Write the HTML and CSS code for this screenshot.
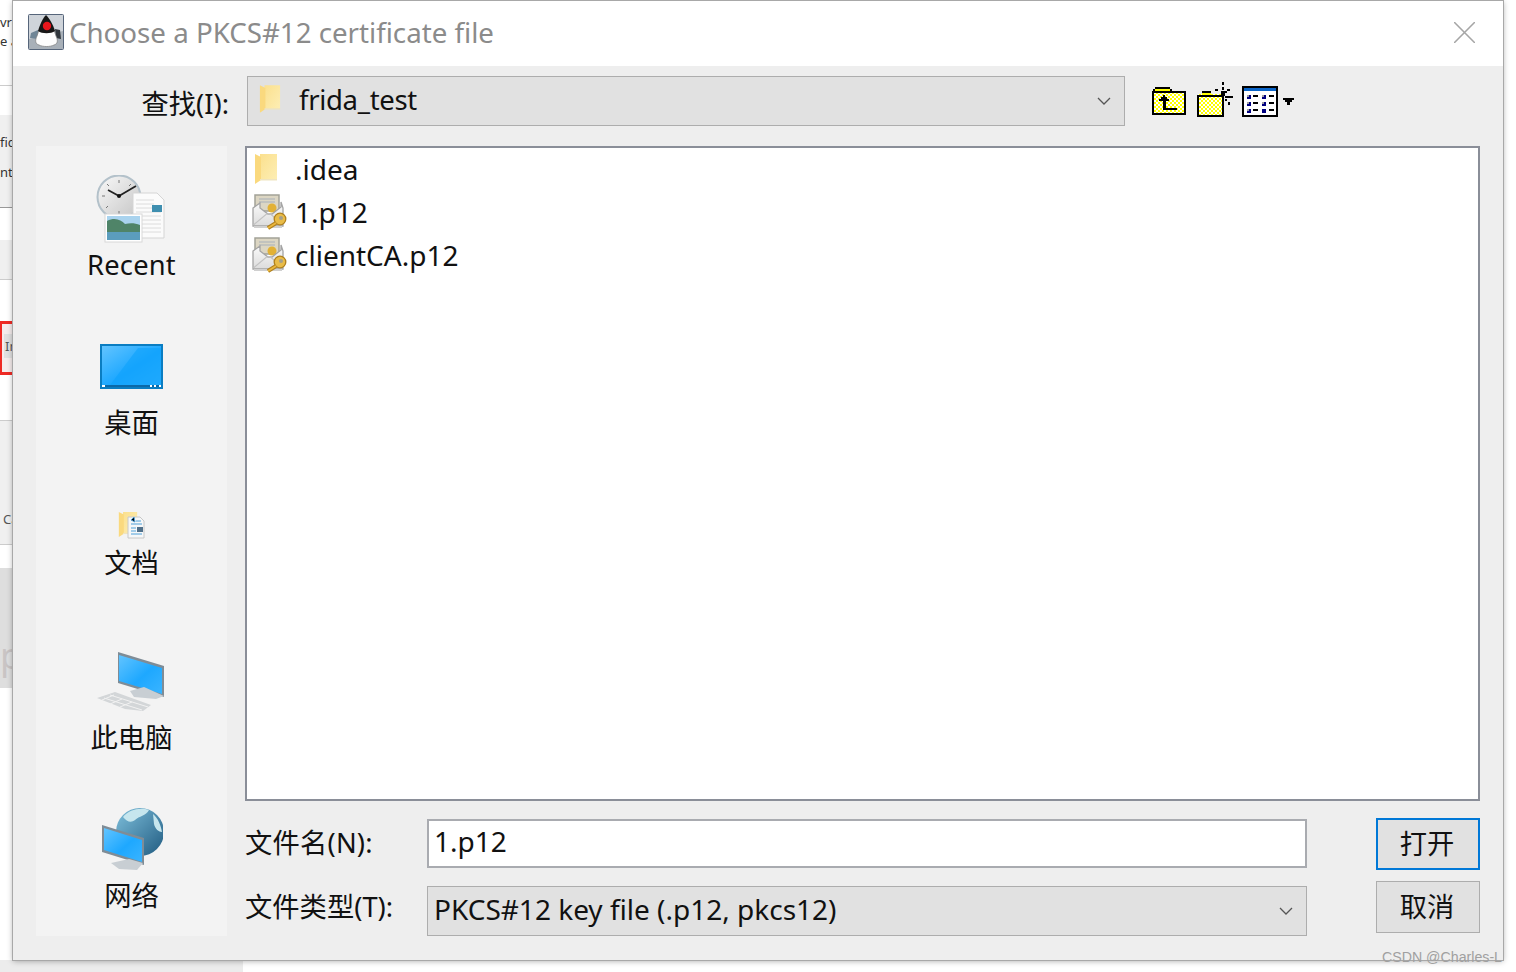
FILE: index.html
```html
<!DOCTYPE html>
<html lang="zh-CN">
<head>
  <meta charset="UTF-8">
  <title>Choose a PKCS#12 certificate file</title>
  <link rel="stylesheet" href="styles.css">
</head>
<body>
  <svg class="defs" width="0" height="0">
    <defs>
      <pattern id="check" width="4" height="4" patternUnits="userSpaceOnUse">
        <rect width="4" height="4" fill="#ffff00"/>
        <rect width="2" height="2" fill="#fff"/>
        <rect x="2" y="2" width="2" height="2" fill="#fff"/>
      </pattern>
      <linearGradient id="folderFill" x1="0" y1="0" x2="1" y2="1">
        <stop offset="0" stop-color="#fbe08e"/>
        <stop offset="1" stop-color="#fdeeb4"/>
      </linearGradient>
      <linearGradient id="screen" x1="0" y1="0" x2="1" y2="1">
        <stop offset="0" stop-color="#62c4ff"/>
        <stop offset="0.55" stop-color="#1ea8ff"/>
        <stop offset="1" stop-color="#3ab4ff"/>
      </linearGradient>
      <linearGradient id="globe" x1="0" y1="0" x2="1" y2="1">
        <stop offset="0" stop-color="#7fc0dc"/>
        <stop offset="1" stop-color="#1f5a80"/>
      </linearGradient>
      <linearGradient id="clockFace" x1="0" y1="0" x2="1" y2="1">
        <stop offset="0" stop-color="#fafafa"/>
        <stop offset="1" stop-color="#c4c4c4"/>
      </linearGradient>
      <linearGradient id="envelope" x1="0" y1="0" x2="0" y2="1">
        <stop offset="0" stop-color="#fbfbfb"/>
        <stop offset="1" stop-color="#dcdcdc"/>
      </linearGradient>
      <symbol id="folder" viewBox="0 0 24 32">
        <path d="M6 1h17v26H6z" fill="url(#folderFill)"/>
        <path d="M1 1l6 3v23l-6 4z" fill="#fad97e"/>
        <path d="M6 26h17v1.500H6z" fill="#efe4bf"/>
      </symbol>
      <symbol id="certificate" viewBox="0 0 36 36">
        <path d="M3 1h24v16H3z" fill="#dcd6c3" stroke="#a3a298" stroke-width="1.500"/>
        <path d="M7 5h16M7 8h16" stroke="#a8b0ba" stroke-width="1.200"/>
        <circle cx="20" cy="14" r="4.500" fill="#e2b135"/>
        <path d="M1 14l7-5v5l8 6h4l9-7V8l2 6v18H1z" fill="url(#envelope)" stroke="#a4a4a4" stroke-width="1.300"/>
        <path d="M1.500 31l13-11h4l13 11" fill="none" stroke="#c2c2c2" stroke-width="1.200"/>
        <path d="M2 33h28" stroke="#d0d0d0" stroke-width="2"/>
        <circle cx="28" cy="25" r="5.800" fill="#e9bc48" stroke="#b0801c" stroke-width="1.300"/>
        <circle cx="29" cy="24" r="2" fill="#a5a08c"/>
        <path d="M24 29l-8 5" fill="none" stroke="#b0801c" stroke-width="4"/>
        <path d="M24 29l-8 5" fill="none" stroke="#eab63c" stroke-width="2"/>
      </symbol>
    </defs>
  </svg>

  <div class="backdrop">
    <div class="band band-a"></div>
    <div class="band band-b"></div>
    <div class="band band-c"></div>
    <div class="band band-d"></div>
    <div class="red-box"><div class="red-inner"></div></div>
    <div class="gray-block"></div>
    <div class="floor"></div>
    <span class="scrap scrap-a">vrc</span>
    <span class="scrap scrap-b">e a</span>
    <span class="scrap scrap-c">fic</span>
    <span class="scrap scrap-d">nt :</span>
    <span class="scrap scrap-e">In</span>
    <span class="scrap scrap-f">Ca</span>
    <span class="scrap scrap-g">p</span>
  </div>

  <div class="dialog">
    <div class="titlebar">
      <svg class="app-icon" viewBox="0 0 36 36">
        <rect x="0.500" y="0.500" width="35" height="35" rx="1" fill="#cfd4da" stroke="#56657a"/>
        <path d="M1 25l34-8v18H1z" fill="#a8b0b8"/>
        <path d="M10 16l-7 3-1 5 8 1z" fill="#6f8596"/>
        <path d="M27 15l5 1 1 9-5-1z" fill="#30363c"/>
        <path d="M11 31c-4-1-4-5-2-9 1-2 1-4 2-6h15c1 2 1 4 2 6 2 4 2 8-2 9-4 2-11 2-15 0z" fill="#fdfdfd" stroke="#7a7a7a" stroke-width="0.700"/>
        <path d="M10 17c2-7 5-13 8-16 3 3 7 9 9 16-4 3-13 3-17 0z" fill="#171717"/>
        <circle cx="19" cy="12" r="4.200" fill="#e8161c"/>
      </svg>
      <div class="title">Choose a PKCS#12 certificate file</div>
      <svg class="close" viewBox="0 0 20 20"><path d="M0 0l20 20M20 0L0 20" stroke="#a6a6a6" stroke-width="1.500"/></svg>
    </div>

    <div class="content">
      <div class="lookin">
        <label class="lookin-label">查找(I):</label>
        <div class="combo lookin-combo">
          <svg class="combo-folder"><use href="#folder"/></svg>
          <span class="combo-text">frida_test</span>
          <svg class="chevron" viewBox="0 0 14 8"><path d="M1 1l6 6 6-6" fill="none" stroke="#555" stroke-width="1.300"/></svg>
        </div>
        <div class="tools">
          <svg class="tool tool-up" viewBox="0 0 34 29" shape-rendering="crispEdges">
            <path d="M1 5h33v22H1z" fill="url(#check)"/>
            <path d="M3 1h15v2H3zM1 3h2v2H1zM18 3h2v2h-2z" fill="#000"/>
            <path d="M3 3h15v2H3z" fill="#ffff00"/>
            <path d="M0 5h34v2H0zM0 5h2v24H0zM32 5h2v24h-2zM0 27h34v2H0z" fill="#000"/>
            <path d="M11 9h2v2h2v2h2v2h-3v7h11v2H11v-9H7v-2h2v-2h2z" fill="#000"/>
          </svg>
          <svg class="tool tool-new" viewBox="0 0 37 35" shape-rendering="crispEdges">
            <path d="M1 12h26v22H1z" fill="url(#check)"/>
            <path d="M5 9h9v2H5zM0 13h27v2H0zM0 13h2v22H0zM25 13h2v22h-2zM0 33h27v2H0z" fill="#000"/>
            <path d="M5 11h9v2H5z" fill="#ffff00"/>
            <path d="M25 0h2v3h-2zM25 5h2v3h-2zM18 7h3v2h-3zM30 7h3v2h-3zM24 9h4v5h-4zM28 14h6v2h-6zM33 14h3v2h-3zM19 13h5v2h-5zM28 17h2v2h-2zM31 20h2v3h-2zM28 9h2v2h-2z" fill="#000"/>
          </svg>
          <svg class="tool tool-view" viewBox="0 0 36 31" shape-rendering="crispEdges">
            <path d="M0 0h36v31H0z" fill="#000"/>
            <path d="M2 2h32v27H2z" fill="#fff"/>
            <path d="M2 2h32v3H2z" fill="#0a64c8"/>
            <path d="M5 9h4v4H5zM5 16h4v4H5zM5 23h4v4H5zM20 9h4v4h-4zM20 16h4v4h-4zM20 23h4v4h-4z" fill="#000080"/>
            <path d="M5 9h2v2H5zM5 16h2v2H5zM5 23h2v2H5zM20 9h2v2h-2zM20 16h2v2h-2z" fill="#a0a0a0"/>
            <path d="M11 9h5v2h-5zM11 16h5v2h-5zM11 23h5v2h-5zM27 9h5v2h-5zM27 16h5v2h-5zM27 23h5v2h-5z" fill="#000"/>
          </svg>
          <svg class="tool-arrow" viewBox="0 0 11 7" shape-rendering="crispEdges"><path d="M0 0h11v2H0zM2 2h7v2H2zM4 4h3v3H4z" fill="#000"/></svg>
        </div>
      </div>

      <div class="middle">
        <div class="places">
          <div class="place place-recent">
            <svg class="place-icon" width="70" height="68" viewBox="0 0 70 68">
              <circle cx="23" cy="22" r="21.500" fill="url(#clockFace)" stroke="#b3c1ca" stroke-width="2"/>
              <path d="M23 5v3M6 21h3M11 9l2 2M35 9l-2 2M10 33l2-2M23 36v3" stroke="#777"/>
              <path d="M23 21L12 15M23 21L40 11" stroke="#222" stroke-width="1.800"/>
              <circle cx="23" cy="21" r="2" fill="#111"/>
              <path d="M37 18h24l7 7v38H37z" fill="#fbfbfb" stroke="#d5d5d5"/>
              <path d="M40 25h18M40 29h18M40 33h18M40 37h25M40 41h25M40 45h25M40 49h25M40 53h25M40 57h25" stroke="#dcdcdc"/>
              <rect x="56" y="30" width="10" height="7" fill="#3f8fb0"/>
              <rect x="9" y="39" width="37" height="28" fill="#fff" stroke="#d8d8d8"/>
              <rect x="11" y="41" width="33" height="24" fill="#a9d3ee"/>
              <path d="M11 46c8-4 14-1 18 3 5-1 10-1 15 1v8H11z" fill="#4f8468"/>
              <rect x="11" y="57" width="33" height="8" fill="#5b9dbd"/>
            </svg>
            <span class="place-name">Recent</span>
          </div>
          <div class="place place-desktop">
            <svg class="place-icon" width="63" height="45" viewBox="0 0 63 45">
              <rect width="63" height="45" fill="#0a7dc2"/>
              <rect x="2" y="2" width="59" height="39" fill="url(#screen)"/>
              <path d="M10 41L38 4h23v37z" fill="#0ea2fb" opacity="0.600"/>
              <rect x="2" y="41" width="59" height="2" fill="#0b69a8"/>
              <path d="M2 41h3v2H2zM50 41h2v2h-2zM54 41h2v2h-2zM59 41h2v2h-2z" fill="#fff"/>
            </svg>
            <span class="place-name">桌面</span>
          </div>
          <div class="place place-docs">
            <svg class="place-icon" width="28" height="32" viewBox="0 0 28 32">
              <use href="#folder" width="20" height="31"/>
              <path d="M10 8h12l4 4v17H10z" fill="#f5f7f8" stroke="#c8c8c8"/>
              <path d="M13 11l3-3 1 5zM18 12h5M13 15h11M13 19h5M13 22h5M13 25h11" stroke="#4ea0d8"/>
              <rect x="19" y="18" width="6" height="5" fill="#50708a"/>
            </svg>
            <span class="place-name">文档</span>
          </div>
          <div class="place place-pc">
            <svg class="place-icon" width="70" height="62" viewBox="0 0 70 62">
              <path d="M22 1l46 14v31L22 32z" fill="#7f8c96"/>
              <path d="M23 4l43 13v26L23 30z" fill="url(#screen)"/>
              <path d="M34 40l14-4 20 9-8 3-22-2z" fill="#c8ced3"/>
              <path d="M1 47l18-6 36 13-8 6-18-2z" fill="#d3d6d8"/>
              <path d="M8 47l38 12M14 44l38 12M6 49l12-5M14 53l12-5M24 56l12-5" stroke="#f2f2f2"/>
            </svg>
            <span class="place-name">此电脑</span>
          </div>
          <div class="place place-net">
            <svg class="place-icon" width="62" height="64" viewBox="0 0 62 64">
              <circle cx="39" cy="25" r="24" fill="url(#globe)"/>
              <path d="M22 10c6-8 18-10 26-7-3 6-10 6-14 10-4 3-8 2-12-3zM52 7c5 4 8 12 9 18-3 0-7-3-8-8z" fill="#c6e6ee"/>
              <path d="M1 18l42 13v27L1 45z" fill="#7f8c96"/>
              <path d="M3 21l38 12v22L3 43z" fill="url(#screen)"/>
              <path d="M10 56l18-4 14 4-6 7-18-1z" fill="#c8ced3"/>
            </svg>
            <span class="place-name">网络</span>
          </div>
        </div>

        <div class="browser">
          <div class="file-list">
            <div class="file-row">
              <svg class="file-folder"><use href="#folder"/></svg>
              <span class="file-name">.idea</span>
            </div>
            <div class="file-row">
              <svg class="file-cert"><use href="#certificate"/></svg>
              <span class="file-name">1.p12</span>
            </div>
            <div class="file-row">
              <svg class="file-cert"><use href="#certificate"/></svg>
              <span class="file-name">clientCA.p12</span>
            </div>
          </div>

          <div class="form">
            <label class="form-label label-name">文件名(N):</label>
            <div class="name-input">1.p12</div>
            <button class="btn btn-open">打开</button>
            <label class="form-label label-type">文件类型(T):</label>
            <div class="combo type-combo">
              <span class="type-text">PKCS#12 key file (.p12, pkcs12)</span>
              <svg class="chevron" viewBox="0 0 14 8"><path d="M1 1l6 6 6-6" fill="none" stroke="#555" stroke-width="1.300"/></svg>
            </div>
            <button class="btn btn-cancel">取消</button>
          </div>
        </div>
      </div>
    </div>
  </div>

  <div class="watermark">CSDN @Charles-L</div>
</body>
</html>
```

FILE: styles.css
```css
* {
  box-sizing: border-box;
}

html, body {
  margin: 0;
  height: 100%;
}

body {
  width: 1516px;
  height: 972px;
  overflow: hidden;
  background: #fff;
  position: relative;
  font-family: "Noto Sans", "Noto Sans CJK SC", sans-serif;
  color: #111;
}

.defs {
  position: absolute;
}

/* what shows behind the dialog */
.backdrop {
  position: absolute;
  left: 0;
  top: 0;
  width: 1516px;
  height: 972px;
  overflow: hidden;
}

.scrap {
  position: absolute;
  left: 0;
  font-size: 13px;
  line-height: 16px;
  color: #333;
}

.scrap-a { top: 14px; }
.scrap-b { top: 33px; }
.scrap-c { top: 134px; }
.scrap-d { top: 164px; }
.scrap-e { top: 338px; left: 5px; color: #555; }
.scrap-f { top: 511px; left: 3px; color: #555; }
.scrap-g { top: 636px; font-size: 36px; line-height: 40px; color: #c9c4c4; }

.band {
  position: absolute;
  left: 0;
  width: 13px;
  background: #f0f0f0;
}

.band-a { top: 85px; height: 30px; border-top: 1px solid #ccc; background: #fff; }
.band-b { top: 115px; height: 93px; border-bottom: 1px solid #999; }
.band-c { top: 240px; height: 40px; border-bottom: 1px solid #ccc; }
.band-d { top: 420px; height: 125px; border-top: 1px solid #ccc; border-bottom: 1px solid #ccc; }

.red-box {
  position: absolute;
  left: -1px;
  top: 321px;
  width: 20px;
  height: 54px;
  padding-top: 10px;
  background: #f5ecec;
  border: 3px solid #ee2a24;
}

.red-inner {
  height: 24px;
  margin-left: 2px;
  background: #e0e0e0;
}

.gray-block {
  position: absolute;
  left: 0;
  top: 568px;
  width: 13px;
  height: 120px;
  background: #dedede;
}

.floor {
  position: absolute;
  left: 0;
  top: 960px;
  width: 243px;
  height: 12px;
  background: #ececec;
}

.dialog {
  position: absolute;
  left: 13px;
  top: 1px;
  width: 1490px;
  height: 959px;
  display: flex;
  flex-direction: column;
  background: #eeeeee;
  box-shadow: 0 0 0 1px #a8a8a8, 0 1px 6px rgba(0, 0, 0, 0.35);
}

.titlebar {
  height: 65px;
  flex: none;
  display: flex;
  align-items: center;
  padding: 0 28px 0 15px;
  background: #fff;
}

.app-icon {
  width: 36px;
  height: 36px;
  flex: none;
  margin-top: -4px;
}

.title {
  margin-left: 5px;
  margin-top: -4px;
  flex: 1;
  font-size: 27.7px;
  color: #8b8b8b;
  white-space: nowrap;
}

.close {
  width: 21px;
  height: 21px;
  margin-left: -1px;
  margin-top: -2px;
}

.content {
  flex: 1;
  display: flex;
  flex-direction: column;
  padding: 10px 23px 24px 23px;
}

.lookin {
  display: flex;
  align-items: center;
  height: 50px;
  flex: none;
}

.lookin-label {
  width: 193px;
  text-align: right;
  font-size: 27.3px;
  padding-top: 2px;
}

.combo {
  display: flex;
  align-items: center;
  background: #e1e1e1;
  border: 1px solid #adadad;
  height: 50px;
}

.lookin-combo {
  width: 878px;
  margin-left: 18px;
  padding: 0 13px 0 11px;
}

.combo-folder {
  width: 22px;
  height: 32px;
  flex: none;
  margin-bottom: 4px;
}

.combo-text {
  flex: 1;
  margin-left: 18px;
  font-size: 27.5px;
  letter-spacing: -0.3px;
  margin-top: -3px;
}

.chevron {
  width: 14px;
  height: 8px;
  flex: none;
}

.tools {
  display: flex;
  align-items: flex-start;
  height: 50px;
  margin-left: 27px;
}

.tool-up {
  width: 34px;
  height: 29px;
  margin-top: 10px;
}

.tool-new {
  width: 37px;
  height: 35px;
  margin-top: 6px;
  margin-left: 11px;
}

.tool-view {
  width: 36px;
  height: 31px;
  margin-top: 10px;
  margin-left: 8px;
}

.tool-arrow {
  width: 11px;
  height: 7px;
  margin-top: 22px;
  margin-left: 5px;
}

.middle {
  flex: 1;
  display: flex;
  margin-top: 20px;
  min-height: 0;
}

.places {
  width: 191px;
  flex: none;
  display: flex;
  flex-direction: column;
  align-items: center;
  background: #f3f3f3;
}

.place {
  display: flex;
  flex-direction: column;
  align-items: center;
}

.place-icon {
  display: block;
  flex: none;
}

.place-name {
  font-size: 27.3px;
  line-height: 38px;
}

.place-recent {
  padding-top: 29px;
}

.place-recent .place-name { margin-top: 3px; letter-spacing: 0.2px; }

.place-desktop {
  margin-top: 60px;
}

.place-desktop .place-name { margin-top: 15px; }

.place-docs {
  margin-top: 67px;
}

.place-docs .place-name { margin-top: 3px; }

.place-pc {
  margin-top: 69px;
}

.place-pc .place-name { margin-top: 6px; }

.place-net {
  margin-top: 50px;
}

.place-net .place-name { margin-top: 6px; }

.browser {
  flex: 1;
  margin-left: 18px;
  display: flex;
  flex-direction: column;
  min-width: 0;
}

.file-list {
  height: 655px;
  flex: none;
  background: #fff;
  border: 2px solid #8a8e98;
  padding: 0 0 0 5px;
}

.file-row {
  display: flex;
  align-items: center;
  height: 43px;
}

.file-row:first-child {
  margin-top: -1px;
}

.file-folder {
  width: 24px;
  height: 32px;
  margin-left: 2px;
  margin-right: 10px;
  flex: none;
}

.file-cert {
  width: 36px;
  height: 36px;
  flex: none;
}

.file-name {
  margin-left: 7px;
  font-size: 28px;
  line-height: 40px;
}

.form {
  display: grid;
  grid-template-columns: 182px 880px 69px 104px;
  grid-template-rows: 52px 52px;
  row-gap: 11px;
  margin-top: 17px;
  align-items: center;
}

.form-label {
  font-size: 27.3px;
  white-space: nowrap;
}

.label-name { grid-column: 1; grid-row: 1; margin-top: -7px; letter-spacing: 0.2px; }
.label-type { grid-column: 1; grid-row: 2; margin-top: -5px; }

.name-input {
  grid-column: 2;
  grid-row: 1;
  align-self: start;
  margin-top: 1px;
  height: 49px;
  background: #fff;
  border: 2px solid #a9abb0;
  padding-left: 5px;
  font-size: 28px;
  line-height: 41px;
}

.type-combo {
  grid-column: 2;
  grid-row: 2;
  align-self: start;
  margin-top: 5px;
  justify-content: space-between;
  padding: 0 13px 0 6px;
}

.type-text {
  font-size: 28px;
  margin-top: -5px;
}

.btn {
  height: 52px;
  background: #e1e1e1;
  border: 1px solid #adadad;
  font-family: inherit;
  font-size: 27.3px;
  color: #111;
  padding: 0 2px 4px 0;
}

.btn-open {
  grid-column: 4;
  grid-row: 1;
  border: 2px solid #0078d7;
}

.btn-cancel {
  grid-column: 4;
  grid-row: 2;
}

.watermark {
  position: absolute;
  right: 14px;
  top: 949px;
  font-family: "Liberation Sans", sans-serif;
  font-size: 14.2px;
  line-height: 16px;
  color: #a0a0a0;
}
```
